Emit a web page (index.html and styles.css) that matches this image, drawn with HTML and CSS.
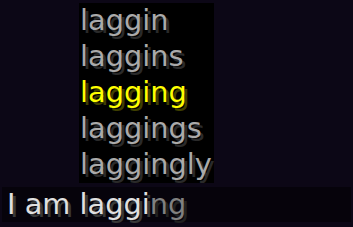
FILE: index.html
```html
<!DOCTYPE html>
<html>
<head>
<meta charset="utf-8">
<link rel="stylesheet" href="styles.css">
</head>
<body>
<div class="screen">
  <ul class="suggestions">
    <li class="row">laggin</li>
    <li class="row">laggins</li>
    <li class="row selected">lagging</li>
    <li class="row">laggings</li>
    <li class="row">laggingly</li>
  </ul>
  <div class="input"><span class="typed">I am laggi</span><span class="hint">ng</span></div>
</div>
</body>
</html>
```
FILE: styles.css
```css
html, body {
  margin: 0;
  padding: 0;
  background: #0c0716;
}
.screen {
  width: 353px;
  height: 227px;
  display: flex;
  flex-direction: column;
  align-items: flex-start;
  font-family: "DejaVu Sans", sans-serif;
  font-size: 28.8px;
  overflow: hidden;
}
.suggestions {
  list-style: none;
  margin: 3px 0 0 79px;
  padding: 0 0 0 1px;
  width: 134px;
  height: 180px;
  background: #000;
}
.row {
  height: 34px;
  line-height: 34px;
  padding-bottom: 2px;
  color: #aaaaaa;
  text-shadow: 3px 3px 0 #2a2a2a;
  white-space: nowrap;
}
.row.selected {
  color: #ffff00;
  text-shadow: 3px 3px 0 #3f3f00;
}
.input {
  align-self: stretch;
  margin: 4px 2px 0 2px;
  height: 35px;
  line-height: 35px;
  padding-left: 5px;
  background: #06030b;
  white-space: nowrap;
}
.typed {
  color: #e0e0e0;
  text-shadow: 3px 3px 0 #383838;
}
.hint {
  color: #808080;
  text-shadow: 3px 3px 0 #202020;
}
```
